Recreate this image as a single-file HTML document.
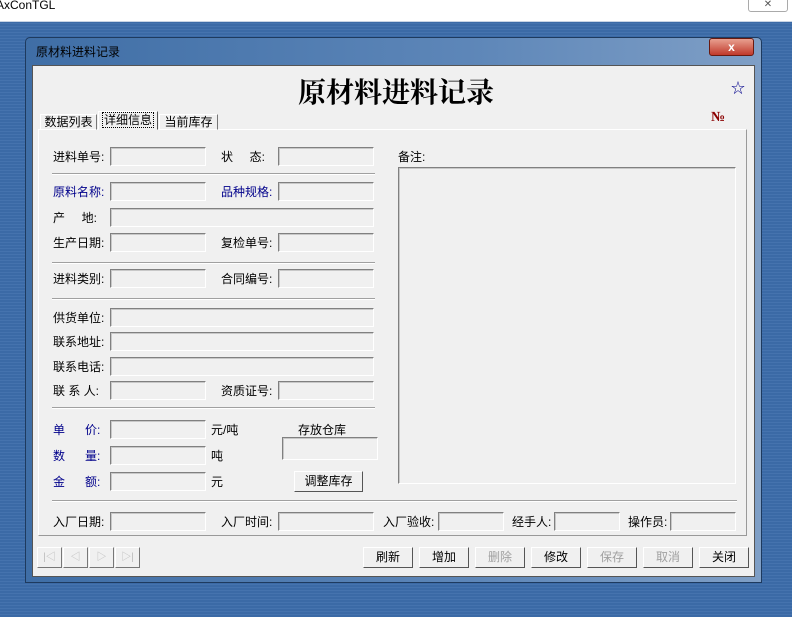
<!DOCTYPE html>
<html><head><meta charset="utf-8"><style>
*{margin:0;padding:0;box-sizing:border-box}
body{width:792px;height:617px;overflow:hidden;position:relative;font-family:"Liberation Sans","Noto Sans CJK SC",sans-serif;font-size:12px;background:repeating-linear-gradient(0deg,#3b6aa6 0 2px,#4573ae 2px 3px)}
.a{position:absolute}
.top{left:0;top:0;width:792px;height:22px;background:#fff;border-bottom:1px solid #c8d4e4}
.win{left:25px;top:37px;width:737px;height:546px;background:linear-gradient(90deg,#3f6ea6,#5d86b8 60%,#7f9fc6);border:1px solid #1e3a5e;border-radius:5px 5px 0 0}
.client{left:32px;top:65px;width:723px;height:512px;background:#f0f0f0;border:1px solid #555}
.in{position:absolute;height:19px;background:#f0f0f0;border:1px solid;border-color:#808080 #fff #fff #808080;box-shadow:inset 1px 1px 0 #c8c8c8}
.l{position:absolute;font-size:12px;color:#000;white-space:nowrap}
.b{color:#00008b}
.sep{position:absolute;left:52px;width:323px;height:2px;border-top:1px solid #a0a0a0;border-bottom:1px solid #fff}
.btn{position:absolute;top:547px;width:50px;height:21px;background:#f0f0f0;border:1px solid;border-color:#fff #555 #555 #fff;text-align:center;line-height:19px;font-size:12px}
.dis{color:#a0a0a0}
.nav{position:absolute;top:547px;width:25px;height:21px;border:1px solid;border-color:#fff #777 #777 #fff;color:#bbb;text-align:center;font-size:10px;line-height:19px}
</style></head><body>
<div class="a top"><span class="a" style="left:-4px;top:-2px;font-size:12px">AxConTGL</span>
<div class="a" style="left:748px;top:-2px;width:40px;height:14px;border:1px solid #aaa;border-radius:0 0 3px 3px;text-align:center;font-size:10px;color:#555">✕</div></div>
<div class="a win"></div>
<div class="a l" style="left:36px;top:43px;color:#000">原材料进料记录</div>
<div class="a" style="left:709px;top:38px;width:45px;height:18px;background:linear-gradient(#e8a090,#c0392b);border:1px solid #6a1a10;border-radius:3px;color:#fff;text-align:center;font-weight:bold;font-size:12px;line-height:16px">x</div>
<div class="a client"></div>
<div class="a" style="left:0;width:792px;top:74px;text-align:center;font-family:'Noto Serif CJK SC','Liberation Serif',serif;font-weight:bold;font-size:28px;line-height:34px;color:#000">原材料进料记录</div>
<div class="a" style="left:731px;top:78px;color:#00008b;font-size:14px">☆</div>
<div class="a" style="left:711px;top:110px;color:#8b0000;font-weight:bold;font-size:14px;font-family:'Liberation Serif',serif">№</div>
<div class="a" style="left:38px;top:129px;width:709px;height:407px;border:1px solid;border-color:#fff #999 #999 #fff"></div>
<div class="a" style="left:40px;top:114px;width:57px;height:16px;border:1px solid;border-color:#fff #777 transparent #fff;text-align:center;line-height:15px">数据列表</div>
<div class="a" style="left:98px;top:111px;width:60px;height:19px;border:1px solid;border-color:#fff #555 transparent #fff;background:#f0f0f0;text-align:center;line-height:17px"><span style="border:1px dotted #000;padding:0 1px">详细信息</span></div>
<div class="a" style="left:159px;top:114px;width:59px;height:16px;border:1px solid;border-color:#fff #777 transparent #fff;text-align:center;line-height:15px">当前库存</div>

<div class="l" style="left:53px;top:148px">进料单号:</div><div class="in" style="left:110px;top:147px;width:96px"></div>
<div class="l" style="left:221px;top:148px">状&nbsp;&nbsp;&nbsp;&nbsp;&nbsp;态:</div><div class="in" style="left:278px;top:147px;width:96px"></div>
<div class="sep" style="top:173px"></div>
<div class="l b" style="left:53px;top:183px">原料名称:</div><div class="in" style="left:110px;top:182px;width:96px"></div>
<div class="l b" style="left:221px;top:183px">品种规格:</div><div class="in" style="left:278px;top:182px;width:96px"></div>
<div class="l" style="left:53px;top:209px">产&nbsp;&nbsp;&nbsp;&nbsp;&nbsp;地:</div><div class="in" style="left:110px;top:208px;width:264px"></div>
<div class="l" style="left:53px;top:234px">生产日期:</div><div class="in" style="left:110px;top:233px;width:96px"></div>
<div class="l" style="left:221px;top:234px">复检单号:</div><div class="in" style="left:278px;top:233px;width:96px"></div>
<div class="sep" style="top:262px"></div>
<div class="l" style="left:53px;top:270px">进料类别:</div><div class="in" style="left:110px;top:269px;width:96px"></div>
<div class="l" style="left:221px;top:270px">合同编号:</div><div class="in" style="left:278px;top:269px;width:96px"></div>
<div class="sep" style="top:298px"></div>
<div class="l" style="left:53px;top:309px">供货单位:</div><div class="in" style="left:110px;top:308px;width:264px"></div>
<div class="l" style="left:53px;top:333px">联系地址:</div><div class="in" style="left:110px;top:332px;width:264px"></div>
<div class="l" style="left:53px;top:358px">联系电话:</div><div class="in" style="left:110px;top:357px;width:264px"></div>
<div class="l" style="left:53px;top:382px">联&nbsp;系&nbsp;人:</div><div class="in" style="left:110px;top:381px;width:96px"></div>
<div class="l" style="left:221px;top:382px">资质证号:</div><div class="in" style="left:278px;top:381px;width:96px"></div>
<div class="sep" style="top:407px"></div>
<div class="l b" style="left:53px;top:421px">单&nbsp;&nbsp;&nbsp;&nbsp;&nbsp;&nbsp;价:</div><div class="in" style="left:110px;top:420px;width:96px"></div><div class="l" style="left:211px;top:421px">元/吨</div>
<div class="l b" style="left:53px;top:447px">数&nbsp;&nbsp;&nbsp;&nbsp;&nbsp;&nbsp;量:</div><div class="in" style="left:110px;top:446px;width:96px"></div><div class="l" style="left:211px;top:447px">吨</div>
<div class="l b" style="left:53px;top:473px">金&nbsp;&nbsp;&nbsp;&nbsp;&nbsp;&nbsp;额:</div><div class="in" style="left:110px;top:472px;width:96px"></div><div class="l" style="left:211px;top:473px">元</div>
<div class="l" style="left:298px;top:421px">存放仓库</div>
<div class="in" style="left:282px;top:437px;width:96px;height:23px"></div>
<div class="a" style="left:294px;top:471px;width:69px;height:21px;border:1px solid;border-color:#fff #555 #555 #fff;text-align:center;line-height:19px">调整库存</div>
<div class="l" style="left:398px;top:148px">备注:</div>
<div class="in" style="left:398px;top:167px;width:338px;height:317px"></div>
<div class="a" style="left:52px;top:500px;width:685px;height:2px;border-top:1px solid #a0a0a0;border-bottom:1px solid #fff"></div>
<div class="l" style="left:53px;top:513px">入厂日期:</div><div class="in" style="left:110px;top:512px;width:96px"></div>
<div class="l" style="left:221px;top:513px">入厂时间:</div><div class="in" style="left:278px;top:512px;width:96px"></div>
<div class="l" style="left:383px;top:513px">入厂验收:</div><div class="in" style="left:438px;top:512px;width:66px"></div>
<div class="l" style="left:512px;top:513px">经手人:</div><div class="in" style="left:554px;top:512px;width:66px"></div>
<div class="l" style="left:628px;top:513px">操作员:</div><div class="in" style="left:670px;top:512px;width:66px"></div>
<div class="nav" style="left:37px">|◁</div><div class="nav" style="left:63px">◁</div><div class="nav" style="left:89px">▷</div><div class="nav" style="left:115px">▷|</div>
<div class="btn" style="left:363px">刷新</div>
<div class="btn" style="left:419px">增加</div>
<div class="btn dis" style="left:475px">删除</div>
<div class="btn" style="left:531px">修改</div>
<div class="btn dis" style="left:587px">保存</div>
<div class="btn dis" style="left:643px">取消</div>
<div class="btn" style="left:699px">关闭</div>
</body></html>
